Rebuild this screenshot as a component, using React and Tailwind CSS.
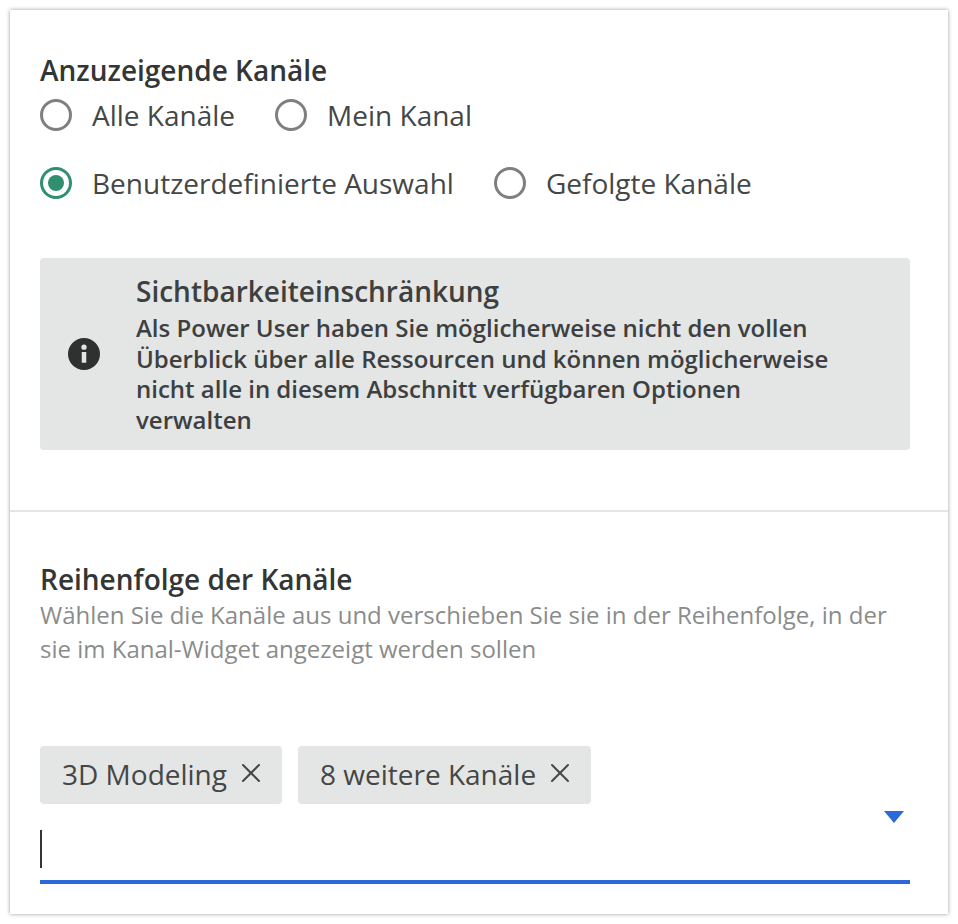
import { X } from 'lucide-react';

const font = { fontFamily: '"Open Sans", sans-serif' };

function Radio({ label, checked = false }) {
  return (
    <label className="flex items-center gap-[20px]">
      <span
        className={`flex h-[32px] w-[32px] items-center justify-center rounded-full border-[3px] ${
          checked ? 'border-[#2f8f6f]' : 'border-[#7f7f7f]'
        }`}
      >
        {checked && <span className="h-[16px] w-[16px] rounded-full bg-[#2f8f6f]" />}
      </span>
      <span className="text-[28px] leading-[36px] text-[#444746]">{label}</span>
    </label>
  );
}

function Chip({ label }) {
  return (
    <span className="flex h-[58px] items-center gap-[8px] rounded-[4px] bg-[#e4e5e5] pl-[22px] pr-[15px] text-[#444746]">
      <span className="pb-[3px] text-[28px] leading-[36px]">{label}</span>
      <X size={32} strokeWidth={1.5} className="mb-[4px] text-[#444746]" />
    </span>
  );
}

export default function App() {
  return (
    <div className="h-[924px] w-[958px] bg-white p-[10px]" style={font}>
      <div className="h-[904px] w-[938px] bg-white shadow-[0_0_4px_rgba(0,0,0,0.4)]">
        <section className="h-[502px] border-b-2 border-[#e4e5e5] pl-[30px] pr-[38px] pt-[42px]">
          <h2 className="text-[28px] font-semibold leading-[36px] text-[#333635]">Anzuzeigende Kanäle</h2>
          <div className="mt-[9px] flex gap-[40px]">
            <Radio label="Alle Kanäle" />
            <Radio label="Mein Kanal" />
          </div>
          <div className="mt-[32px] flex gap-[40px]">
            <Radio label="Benutzerdefinierte Auswahl" checked />
            <Radio label="Gefolgte Kanäle" />
          </div>
          <div className="mt-[57px] flex h-[192px] items-center rounded-[4px] bg-[#e4e5e5] pl-[28px] pr-[60px]">
            <svg width="32" height="32" viewBox="0 0 24 24" className="shrink-0 text-[#2e3130]" fill="currentColor">
              <path d="M12 0a12 12 0 1 0 0 24 12 12 0 0 0 0-24Zm1.7 18.5h-3.4v-8h3.4v8Zm-1.7-9.6a2 2 0 1 1 0-4 2 2 0 0 1 0 4Z" />
            </svg>
            <div className="ml-[36px]">
              <div className="text-[28px] font-semibold leading-[36px] text-[#3d403f]">Sichtbarkeiteinschränkung</div>
              <p className="mt-[4px] text-[24px] font-semibold leading-[30.5px] text-[#3d403f]">
                Als Power User haben Sie möglicherweise nicht den vollen Überblick über alle Ressourcen und können möglicherweise nicht alle in diesem Abschnitt verfügbaren Optionen verwalten
              </p>
            </div>
          </div>
        </section>
        <section className="relative pl-[30px] pr-[38px] pt-[49px]">
          <h2 className="text-[28px] font-semibold leading-[36px] text-[#333635]">Reihenfolge der Kanäle</h2>
          <p className="mt-[1px] text-[24px] leading-[34px] text-[#8a8c8b]">
            Wählen Sie die Kanäle aus und verschieben Sie sie in der Reihenfolge, in der sie im Kanal-Widget angezeigt werden sollen
          </p>
          <div className="mt-[80px] flex gap-[16px]">
            <Chip label="3D Modeling" />
            <Chip label="8 weitere Kanäle" />
          </div>
          <div className="relative h-[80px] border-b-[4px] border-[#2d68d8]">
            <span className="absolute left-0 top-[26px] h-[38px] w-[2px] bg-[#333635]" />
            <span className="absolute right-[6px] top-[7px] h-0 w-0 border-l-[10px] border-r-[10px] border-t-[12px] border-l-transparent border-r-transparent border-t-[#2d68d8]" />
          </div>
        </section>
      </div>
    </div>
  );
}
